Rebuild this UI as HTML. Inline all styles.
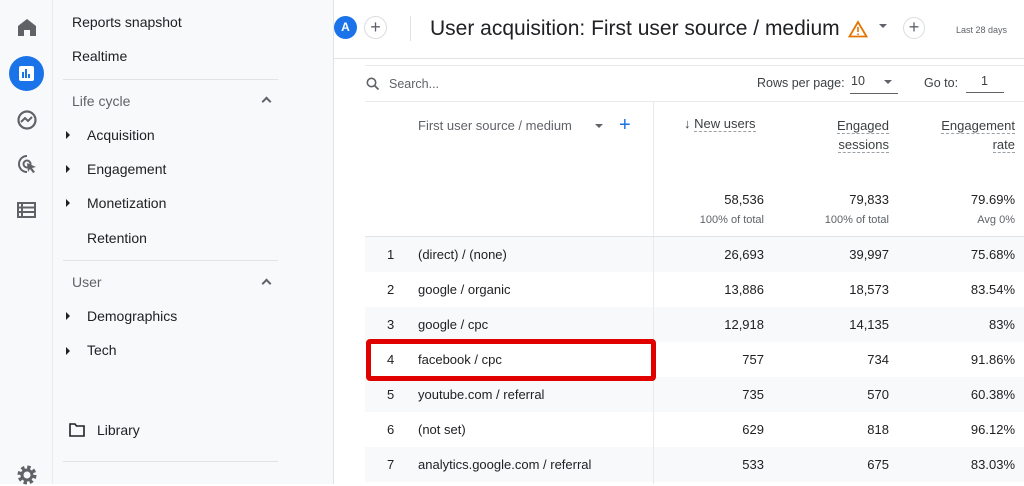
<!DOCTYPE html>
<html><head><style>
*{margin:0;padding:0;box-sizing:border-box}
body{width:1024px;height:484px;overflow:hidden;background:#fff;font-family:"Liberation Sans",sans-serif;color:#202124;position:relative}
.rail{position:absolute;left:0;top:0;width:53px;height:484px;background:#f8f9fa;border-right:1px solid #e8eaed}
.nav{position:absolute;left:53px;top:0;width:281px;height:484px;background:#f8f9fa;border-right:1px solid #e3e3e3}
.nav div{position:absolute;font-size:14px;white-space:nowrap}
.nav .h{color:#5f6368}
.tri{position:absolute;width:0;height:0;border-top:4px solid transparent;border-bottom:4px solid transparent;border-left:4px solid #202124}
.hr{position:absolute;left:10px;width:215px;height:1px;background:#e3e3e3}
.chev{position:absolute;width:7px;height:7px;border-left:2px solid #5f6368;border-top:2px solid #5f6368;transform:rotate(45deg)}
.top{position:absolute;left:334px;top:0;right:0;height:59px;background:#fff;border-bottom:1px solid #e3e3e3}
.t{position:absolute;white-space:nowrap}
.row{position:absolute;left:365px;width:659px;height:35px;font-size:13px}
.row span{position:absolute;top:10px}
.g{background:#f8f9fa}
.r{text-align:right}
</style></head><body>
<div class="rail">
<svg style="position:absolute;left:17px;top:18px" width="20" height="18" viewBox="0 0 20 18"><path d="M10 1L1 8v10h6v-6h6v6h6V8z" fill="#5f6368"/></svg>
<div style="position:absolute;left:9px;top:56px;width:35px;height:35px;border-radius:50%;background:#1a73e8"></div>
<div style="position:absolute;left:19px;top:66px;width:15px;height:15px;border-radius:2px;background:#fff"></div>
<div style="position:absolute;left:22px;top:72px;width:2px;height:6px;background:#1a73e8"></div><div style="position:absolute;left:25px;top:69px;width:2px;height:9px;background:#1a73e8"></div><div style="position:absolute;left:28px;top:74px;width:2px;height:4px;background:#1a73e8"></div>
<svg style="position:absolute;left:16px;top:109px" width="22" height="22" viewBox="0 0 22 22"><circle cx="11" cy="11" r="8.5" fill="none" stroke="#5f6368" stroke-width="2.2"/><path d="M5 13l4-4 3 3 4-4" fill="none" stroke="#5f6368" stroke-width="2"/></svg>
<svg style="position:absolute;left:16px;top:153px" width="22" height="22" viewBox="0 0 22 22"><path d="M11 3a8 8 0 1 0 0 16" fill="none" stroke="#5f6368" stroke-width="2"/><circle cx="11" cy="11" r="3.5" fill="none" stroke="#5f6368" stroke-width="2"/><path d="M11 10l9 4-4 1 3 4-2 1-3-4-2 3z" fill="#5f6368"/></svg>
<svg style="position:absolute;left:17px;top:202px" width="19" height="16" viewBox="0 0 19 16"><path d="M1 1h17v14H1zM1 5.5h17M1 10h17M5 1v14" fill="none" stroke="#5f6368" stroke-width="2"/></svg>
<svg style="position:absolute;left:16px;top:464px" width="22" height="22" viewBox="0 0 22 22"><circle cx="11" cy="11" r="7" fill="none" stroke="#5f6368" stroke-width="5" stroke-dasharray="3 2.5"/><circle cx="11" cy="11" r="5" fill="none" stroke="#5f6368" stroke-width="3"/></svg>
</div>
<div class="nav">
<div style="left:19px;top:14px">Reports snapshot</div>
<div style="left:19px;top:48px">Realtime</div>
<div class="hr" style="top:79px"></div>
<div class="h" style="left:19px;top:93px">Life cycle</div><i class="chev" style="left:210px;top:98px"></i>
<i class="tri" style="left:13px;top:131px"></i><div style="left:34px;top:127px">Acquisition</div>
<i class="tri" style="left:13px;top:165px"></i><div style="left:34px;top:161px">Engagement</div>
<i class="tri" style="left:13px;top:199px"></i><div style="left:34px;top:195px">Monetization</div>
<div style="left:34px;top:230px">Retention</div>
<div class="hr" style="top:260px"></div>
<div class="h" style="left:19px;top:274px">User</div><i class="chev" style="left:210px;top:280px"></i>
<i class="tri" style="left:13px;top:312px"></i><div style="left:34px;top:308px">Demographics</div>
<i class="tri" style="left:13px;top:347px"></i><div style="left:34px;top:342px">Tech</div>
<svg style="position:absolute;left:16px;top:423px" width="16" height="14" viewBox="0 0 16 14"><path d="M1 1h5l1.5 2H15v10H1z" fill="none" stroke="#202124" stroke-width="1.6"/></svg>
<div style="left:44px;top:422px">Library</div>
<div class="hr" style="top:461px"></div>
</div>
<div class="top">
<div style="position:absolute;left:0;top:16px;width:23px;height:23px;border-radius:50%;background:#1a73e8;color:#fff;font-size:12px;font-weight:bold;text-align:center;line-height:23px">A</div>
<div style="position:absolute;left:30px;top:16px;width:23px;height:23px;border-radius:50%;border:1px solid #dadce0;color:#5f6368;font-size:18px;text-align:center;line-height:20px">+</div>
<div style="position:absolute;left:76px;top:16px;width:1px;height:25px;background:#e3e3e3"></div>
<div class="t" style="left:96px;top:17px;font-size:21px;color:#202124;letter-spacing:0">User acquisition: First user source / medium</div>
<svg style="position:absolute;left:514px;top:20px" width="20" height="18" viewBox="0 0 20 18"><path d="M10 2L1.5 16.5h17z" fill="none" stroke="#e37400" stroke-width="1.8"/><path d="M10 7v5M10 13.5v1.5" stroke="#e37400" stroke-width="1.6"/></svg>
<i class="tri" style="left:545px;top:24px;border-left:4px solid transparent;border-right:4px solid transparent;border-top:4px solid #5f6368;border-bottom:0"></i>
<div style="position:absolute;left:569px;top:17px;width:22px;height:22px;border-radius:50%;border:1px solid #dadce0;color:#5f6368;font-size:18px;text-align:center;line-height:19px">+</div>
<div class="t" style="left:622px;top:25px;font-size:9px;color:#5f6368">Last 28 days</div>
</div>
<div style="position:absolute;left:365px;top:65px;width:659px;height:1px;background:#e8eaed"></div>
<svg style="position:absolute;left:366px;top:77px" width="14" height="14" viewBox="0 0 14 14"><circle cx="5.5" cy="5.5" r="4.2" fill="none" stroke="#5f6368" stroke-width="1.6"/><path d="M8.5 8.5l4 4" stroke="#5f6368" stroke-width="1.8"/></svg>
<div class="t" style="left:389px;top:77px;font-size:12.5px;color:#5f6368">Search...</div>
<div class="t" style="left:757px;top:76px;font-size:12.5px;color:#3c4043">Rows per page:</div>
<div class="t" style="left:851px;top:74px;font-size:12.5px;color:#3c4043">10</div>
<div style="position:absolute;left:850px;top:93px;width:48px;height:1px;background:#5f6368"></div>
<i class="tri" style="left:884px;top:80px;border-left:4px solid transparent;border-right:4px solid transparent;border-top:4px solid #5f6368;border-bottom:0"></i>
<div class="t" style="left:924px;top:76px;font-size:12.5px;color:#3c4043">Go to:</div>
<div class="t" style="left:981px;top:74px;font-size:12.5px;color:#3c4043">1</div>
<div style="position:absolute;left:966px;top:92px;width:38px;height:1px;background:#5f6368"></div>
<div style="position:absolute;left:365px;top:101px;width:659px;height:1px;background:#e8eaed"></div>
<div style="position:absolute;left:653px;top:102px;width:1px;height:382px;background:#e8eaed"></div>
<div class="t" style="left:418px;top:118px;font-size:13px;color:#5f6368">First user source / medium</div>
<i class="tri" style="left:595px;top:124px;border-left:4px solid transparent;border-right:4px solid transparent;border-top:4px solid #5f6368;border-bottom:0"></i>
<div class="t" style="left:619px;top:114px;font-size:20px;color:#1a73e8">+</div>
<div class="t" style="left:684px;top:116px;font-size:13px;color:#3c4043">↓ <span style="border-bottom:1px dashed #9aa0a6">New users</span></div>
<div class="t r" style="right:135px;top:116px;font-size:13px;color:#3c4043;line-height:19px"><span style="border-bottom:1px dashed #9aa0a6">Engaged</span><br><span style="border-bottom:1px dashed #9aa0a6">sessions</span></div>
<div class="t r" style="right:9px;top:116px;font-size:13px;color:#3c4043;line-height:19px"><span style="border-bottom:1px dashed #9aa0a6">Engagement</span><br><span style="border-bottom:1px dashed #9aa0a6">rate</span></div>
<div class="t r" style="right:260px;top:192px;font-size:13px">58,536</div>
<div class="t r" style="right:135px;top:192px;font-size:13px">79,833</div>
<div class="t r" style="right:9px;top:192px;font-size:13px">79.69%</div>
<div class="t r" style="right:260px;top:214px;font-size:11px;color:#5f6368">100% of total</div>
<div class="t r" style="right:135px;top:214px;font-size:11px;color:#5f6368">100% of total</div>
<div class="t r" style="right:9px;top:214px;font-size:11px;color:#5f6368">Avg 0%</div>
<div style="position:absolute;left:365px;top:236px;width:659px;height:1px;background:#e3e3e3"></div>

<div class="row g" style="top:237px"><span style="left:22px">1</span><span style="left:53px">(direct) / (none)</span><span style="right:260px">26,693</span><span style="right:135px">39,997</span><span style="right:9px">75.68%</span></div>
<div class="row" style="top:272px"><span style="left:22px">2</span><span style="left:53px">google / organic</span><span style="right:260px">13,886</span><span style="right:135px">18,573</span><span style="right:9px">83.54%</span></div>
<div class="row g" style="top:307px"><span style="left:22px">3</span><span style="left:53px">google / cpc</span><span style="right:260px">12,918</span><span style="right:135px">14,135</span><span style="right:9px">83%</span></div>
<div class="row" style="top:342px"><span style="left:22px">4</span><span style="left:53px">facebook / cpc</span><span style="right:260px">757</span><span style="right:135px">734</span><span style="right:9px">91.86%</span></div>
<div class="row g" style="top:377px"><span style="left:22px">5</span><span style="left:53px">youtube.com / referral</span><span style="right:260px">735</span><span style="right:135px">570</span><span style="right:9px">60.38%</span></div>
<div class="row" style="top:412px"><span style="left:22px">6</span><span style="left:53px">(not set)</span><span style="right:260px">629</span><span style="right:135px">818</span><span style="right:9px">96.12%</span></div>
<div class="row g" style="top:447px"><span style="left:22px">7</span><span style="left:53px">analytics.google.com / referral</span><span style="right:260px">533</span><span style="right:135px">675</span><span style="right:9px">83.03%</span></div>
<div style="position:absolute;left:653px;top:237px;width:1px;height:247px;background:#e8eaed"></div>
<div style="position:absolute;left:366px;top:339px;width:290px;height:42px;border:5px solid #e00000;border-radius:4px"></div>
</body></html>
